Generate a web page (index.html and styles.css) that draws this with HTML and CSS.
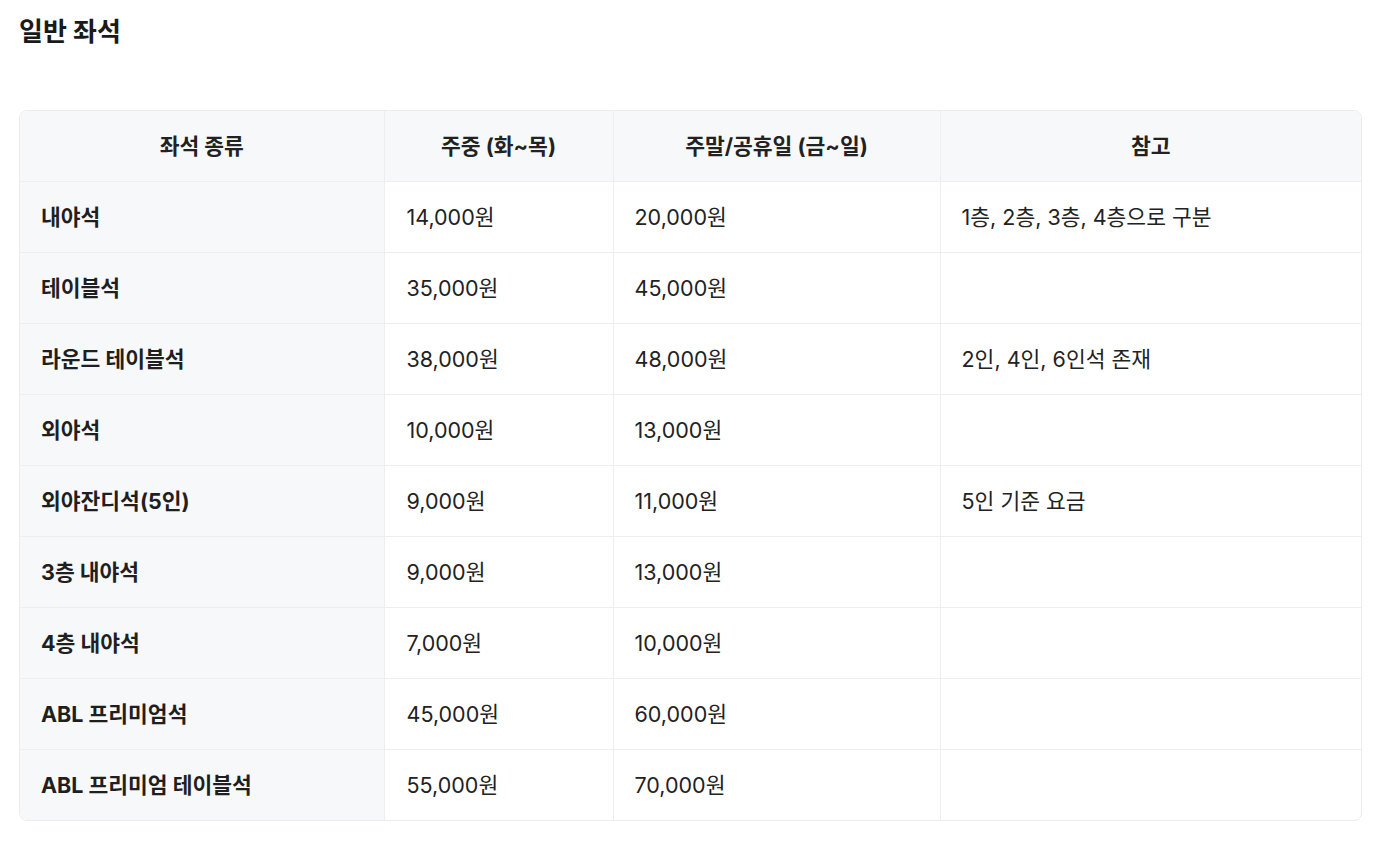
FILE: index.html
```html
<!DOCTYPE html>
<html lang="ko">
<head>
<meta charset="utf-8">
<link rel="stylesheet" href="styles.css">
</head>
<body>
<main class="page">
  <h2 class="title">일반 좌석</h2>
  <div class="table-wrap">
    <table class="price-table">
      <colgroup>
        <col class="c1"><col class="c2"><col class="c3"><col class="c4">
      </colgroup>
      <thead>
        <tr><th>좌석 종류</th><th>주중 (화~목)</th><th>주말/공휴일 (금~일)</th><th>참고</th></tr>
      </thead>
      <tbody>
        <tr><td class="name">내야석</td><td>14,000원</td><td>20,000원</td><td>1층, 2층, 3층, 4층으로 구분</td></tr>
        <tr><td class="name">테이블석</td><td>35,000원</td><td>45,000원</td><td></td></tr>
        <tr><td class="name">라운드 테이블석</td><td>38,000원</td><td>48,000원</td><td>2인, 4인, 6인석 존재</td></tr>
        <tr><td class="name">외야석</td><td>10,000원</td><td>13,000원</td><td></td></tr>
        <tr><td class="name">외야잔디석(5인)</td><td>9,000원</td><td>11,000원</td><td>5인 기준 요금</td></tr>
        <tr><td class="name">3층 내야석</td><td>9,000원</td><td>13,000원</td><td></td></tr>
        <tr><td class="name">4층 내야석</td><td>7,000원</td><td>10,000원</td><td></td></tr>
        <tr><td class="name">ABL 프리미엄석</td><td>45,000원</td><td>60,000원</td><td></td></tr>
        <tr><td class="name">ABL 프리미엄 테이블석</td><td>55,000원</td><td>70,000원</td><td></td></tr>
      </tbody>
    </table>
  </div>
</main>
</body>
</html>
```

FILE: styles.css
```css
* { box-sizing: border-box; }
body {
  margin: 0;
  background: #fff;
  font-family: Inter, "Noto Sans CJK KR", sans-serif;
  color: #1f1f1f;
}
.page {
  padding: 14px 27px 0 19px;
}
.title {
  margin: 0;
  font-size: 26px;
  font-weight: 700;
  line-height: 36px;
  color: #1a1a1a;
}
.table-wrap {
  margin-top: 60px;
  border: 1px solid #ececec;
  border-radius: 8px;
  overflow: hidden;
  width: 1343px;
}
.price-table {
  width: 100%;
  border-collapse: collapse;
  table-layout: fixed;
  font-family: Inter, "Noto Sans CJK KR", sans-serif;
  font-size: 21.5px;
}
.c1 { width: 364px; }
.c2 { width: 229px; }
.c3 { width: 327px; }
.c4 { width: auto; }
.price-table th,
.price-table td {
  height: 71px;
  padding: 0 21px;
  border-left: 1px solid #eeeeee;
  border-top: 1px solid #eeeeee;
  vertical-align: middle;
  line-height: 28px;
}
.price-table th:first-child,
.price-table td:first-child { border-left: none; }
.price-table td:nth-child(2) { padding-left: 22px; }
.price-table thead th {
  border-top: none;
  height: 70px;
  background: #f7f8fa;
  font-weight: 700;
  text-align: center;
  color: #222;
}
.price-table td {
  font-weight: 400;
  color: #222;
}
.price-table td.name {
  background: #f7f8fa;
  font-weight: 700;
  color: #1f1f1f;
}
```
